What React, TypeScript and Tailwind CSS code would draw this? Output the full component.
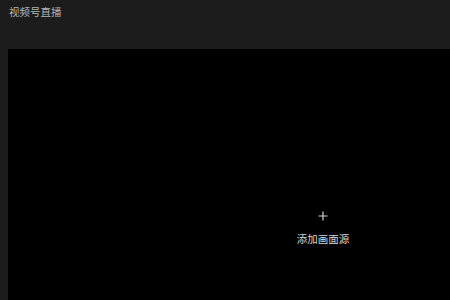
export default function App() {
  return (
    <div
      className="h-[300px] w-[450px] overflow-hidden bg-[#1c1c1c]"
      style={{ fontFamily: '"Noto Sans CJK SC", "Noto Sans", sans-serif' }}
    >
      {/* Header */}
      <div className="h-[49px] pl-[9px] pt-[3px]">
        <div className="text-[10.5px] leading-[18px] text-[#b4b4b4]">视频号直播</div>
      </div>

      {/* Preview canvas */}
      <div className="ml-[8px] flex h-[358px] w-[630px] flex-col items-center justify-center bg-black">
        <svg width="10" height="10" viewBox="0 0 10 10" className="text-[#d0d0d0]">
          <path d="M5 0.5v9M0.5 5h9" stroke="currentColor" strokeWidth="1.2" />
        </svg>
        <div className="mt-[11px] text-[10.5px] leading-[14px] text-[#d8d8d8]">添加画面源</div>
      </div>
    </div>
  );
}
